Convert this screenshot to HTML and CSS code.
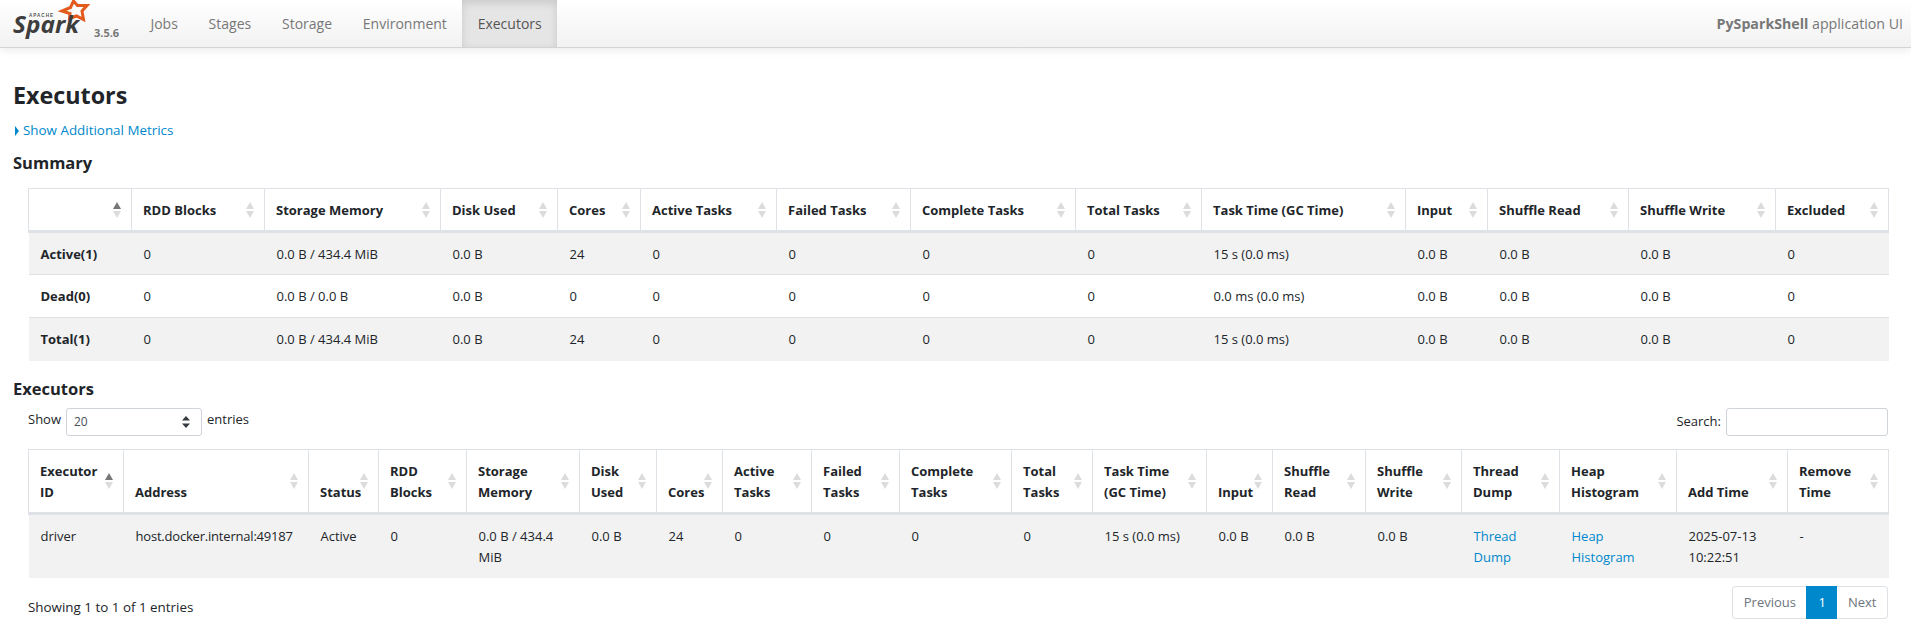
FILE: index.html
```html
<!DOCTYPE html>
<html lang="en">
<head>
<meta charset="utf-8">
<title>PySparkShell - Executors</title>
<link rel="stylesheet" href="styles.css">
</head>
<body>
<nav class="navbar">
  <a class="brand" href="#">
    <svg class="logo" width="80" height="40" viewBox="0 0 80 40">
      <polygon fill="none" stroke="#e25a1c" stroke-width="3" stroke-miterlimit="6" points="62.5,1 66.5,5.5 76,5.5 71,11 72.5,19.5 65.5,16 58.5,18.5 59,13.5 51,11 59.5,7.5"/>
      <text class="logo-apache" x="18" y="16.5">APACHE</text>
      <text class="logo-spark" x="2" y="33" textLength="66" lengthAdjust="spacingAndGlyphs">Spark</text>
    </svg>
    <span class="version">3.5.6</span>
  </a>
  <ul class="tabs">
    <li><a href="#">Jobs</a></li>
    <li><a href="#">Stages</a></li>
    <li><a href="#">Storage</a></li>
    <li><a href="#">Environment</a></li>
    <li class="active"><a href="#">Executors</a></li>
  </ul>
  <p class="app-name"><strong>PySparkShell</strong> application UI</p>
</nav>

<main class="page">
  <h3 class="page-title">Executors</h3>
  <a class="metrics-toggle" href="#"><span class="caret"></span>Show Additional Metrics</a>

  <h4 class="section-title summary-title">Summary</h4>
  <div class="indent">
    <table class="grid summary">
      <colgroup><col><col><col><col><col><col><col><col><col><col><col><col><col><col></colgroup>
      <thead>
        <tr>
          <th class="sorted"></th><th>RDD Blocks</th><th>Storage Memory</th><th>Disk Used</th><th>Cores</th><th>Active Tasks</th><th>Failed Tasks</th><th>Complete Tasks</th><th>Total Tasks</th><th>Task Time (GC Time)</th><th>Input</th><th>Shuffle Read</th><th>Shuffle Write</th><th>Excluded</th>
        </tr>
      </thead>
      <tbody>
        <tr><td class="label">Active(1)</td><td>0</td><td>0.0 B / 434.4 MiB</td><td>0.0 B</td><td>24</td><td>0</td><td>0</td><td>0</td><td>0</td><td>15 s (0.0 ms)</td><td>0.0 B</td><td>0.0 B</td><td>0.0 B</td><td>0</td></tr>
        <tr><td class="label">Dead(0)</td><td>0</td><td>0.0 B / 0.0 B</td><td>0.0 B</td><td>0</td><td>0</td><td>0</td><td>0</td><td>0</td><td>0.0 ms (0.0 ms)</td><td>0.0 B</td><td>0.0 B</td><td>0.0 B</td><td>0</td></tr>
        <tr><td class="label">Total(1)</td><td>0</td><td>0.0 B / 434.4 MiB</td><td>0.0 B</td><td>24</td><td>0</td><td>0</td><td>0</td><td>0</td><td>15 s (0.0 ms)</td><td>0.0 B</td><td>0.0 B</td><td>0.0 B</td><td>0</td></tr>
      </tbody>
    </table>
  </div>

  <h4 class="section-title executors-title">Executors</h4>
  <div class="indent">
    <div class="table-controls">
      <label class="length">Show
        <span class="select-wrap">
          <select class="length-select"><option>20</option></select>
          <svg class="select-arrows" width="8" height="12" viewBox="0 0 8 12"><path fill="#343a40" d="M4 0 L8 4.5 H0 Z M0 7.5 H8 L4 12 Z"/></svg>
        </span>
        entries</label>
      <label class="search">Search: <input class="search-input" type="text"></label>
    </div>
    <table class="grid executors">
      <colgroup><col><col><col><col><col><col><col><col><col><col><col><col><col><col><col><col><col><col><col></colgroup>
      <thead>
        <tr>
          <th class="sorted">Executor ID</th><th>Address</th><th>Status</th><th>RDD Blocks</th><th>Storage Memory</th><th>Disk Used</th><th>Cores</th><th>Active Tasks</th><th>Failed Tasks</th><th>Complete Tasks</th><th>Total Tasks</th><th>Task Time (GC Time)</th><th>Input</th><th>Shuffle Read</th><th>Shuffle Write</th><th>Thread Dump</th><th>Heap Histogram</th><th>Add Time</th><th>Remove Time</th>
        </tr>
      </thead>
      <tbody>
        <tr><td>driver</td><td class="address">host.docker.internal:49187</td><td>Active</td><td>0</td><td>0.0 B / 434.4 MiB</td><td>0.0 B</td><td>24</td><td>0</td><td>0</td><td>0</td><td>0</td><td>15 s (0.0 ms)</td><td>0.0 B</td><td>0.0 B</td><td>0.0 B</td><td><a href="#">Thread Dump</a></td><td><a href="#">Heap Histogram</a></td><td>2025-07-13 10:22:51</td><td>-</td></tr>
      </tbody>
    </table>
    <div class="table-footer">
      <div class="info">Showing 1 to 1 of 1 entries</div>
      <ul class="pagination">
        <li class="disabled"><a href="#">Previous</a></li>
        <li class="current"><a href="#">1</a></li>
        <li class="disabled"><a href="#">Next</a></li>
      </ul>
    </div>
  </div>
</main>
</body>
</html>
```
FILE: styles.css
```css
* { box-sizing: border-box; }
html, body { margin: 0; padding: 0; }
body {
  font-family: "Open Sans", "Noto Sans", sans-serif;
  font-size: 13px;
  line-height: 21px;
  color: #212529;
  background: #fff;
  overflow: hidden;
}
a { color: #0088cc; text-decoration: none; }

/* Navbar */
.navbar {
  display: flex;
  align-items: stretch;
  height: 48px;
  background: linear-gradient(to bottom, #ffffff, #f2f2f2);
  border-bottom: 1px solid #d4d4d4;
  box-shadow: 0 1px 10px rgba(0, 0, 0, 0.1);
  overflow: hidden;
}
.brand { position: relative; display: block; width: 135px; flex: none; }
.logo { position: absolute; left: 11px; top: 0; overflow: visible; }
.logo-apache { font: 700 4.6px "Liberation Sans", sans-serif; letter-spacing: 1px; fill: #555; }
.logo-spark { font: italic 700 23px "Open Sans", sans-serif; fill: #3d3d3d; }
.version {
  position: absolute;
  left: 94px;
  top: 22px;
  font-size: 11px;
  font-weight: 700;
  color: #777;
}
.tabs { display: flex; list-style: none; margin: 0; padding: 0; flex: 1; }
.tabs a {
  display: block;
  height: 47px;
  padding: 13px 15.4px 0;
  font-size: 14px;
  color: #777;
}
.tabs .active a {
  background: #e5e5e5;
  color: #555;
  box-shadow: inset 0 3px 8px rgba(0, 0, 0, 0.125);
}
.app-name { margin: 13px 8px 0 0; font-size: 14.2px; color: #777; }

/* Page */
.page { padding: 0 23px 0 13px; }
.page-title { margin: 30px 0 0; font-size: 23.3px; line-height: 34px; font-weight: 700; }
.metrics-toggle { display: flex; align-items: center; margin: 8px 0 0 1px; height: 21px; font-size: 13.4px; }
.caret {
  width: 0;
  height: 0;
  margin: 0 4px 0 1px;
  border-left: 4px solid #0088cc;
  border-top: 5px solid transparent;
  border-bottom: 5px solid transparent;
}
.section-title { margin: 0; font-size: 16.5px; line-height: 24px; font-weight: 700; }
.summary-title { margin-top: 10px; }
.executors-title { margin-top: 16px; }
.summary-title + .indent { margin-top: 13px; }
.indent { margin-left: 15px; }

/* Tables */
.grid { table-layout: fixed; width: 1860px; border-collapse: collapse; }
.grid th, .grid td { padding: 10px 12px; text-align: left; vertical-align: top; }
.grid th {
  position: relative;
  vertical-align: bottom;
  font-weight: 700;
  padding: 11px 24px 9px 11px;
  border: 1px solid #dee2e6;
  border-bottom-width: 3px;
}
.grid th::before, .grid th::after {
  content: "";
  position: absolute;
  right: 10px;
  width: 0;
  height: 0;
  border-left: 4px solid transparent;
  border-right: 4px solid transparent;
}
.grid th::before { top: calc(50% - 8px); border-bottom: 7px solid #dcdcdc; }
.grid th::after { top: calc(50% + 1px); border-top: 7px solid #dcdcdc; }
.grid th.sorted::before { border-bottom-color: #777; }
.grid td { border-top: 1px solid #dee2e6; }
.grid tbody tr:nth-child(odd) { background: #f2f2f2; }
.grid thead + tbody tr:first-child td { border-top: 0; }
.label { font-weight: 700; }
.summary td { height: 43px; padding-top: 11px; padding-bottom: 9px; }
.executors td { padding-top: 11px; }
.address { letter-spacing: -0.2px; }

.summary col:nth-child(1) { width: 103px; }
.summary col:nth-child(2) { width: 133px; }
.summary col:nth-child(3) { width: 176px; }
.summary col:nth-child(4) { width: 117px; }
.summary col:nth-child(5) { width: 83px; }
.summary col:nth-child(6) { width: 136px; }
.summary col:nth-child(7) { width: 134px; }
.summary col:nth-child(8) { width: 165px; }
.summary col:nth-child(9) { width: 126px; }
.summary col:nth-child(10) { width: 204px; }
.summary col:nth-child(11) { width: 82px; }
.summary col:nth-child(12) { width: 141px; }
.summary col:nth-child(13) { width: 147px; }
.summary col:nth-child(14) { width: 113px; }

.executors col:nth-child(1) { width: 95px; }
.executors col:nth-child(2) { width: 185px; }
.executors col:nth-child(3) { width: 70px; }
.executors col:nth-child(4) { width: 88px; }
.executors col:nth-child(5) { width: 113px; }
.executors col:nth-child(6) { width: 77px; }
.executors col:nth-child(7) { width: 66px; }
.executors col:nth-child(8) { width: 89px; }
.executors col:nth-child(9) { width: 88px; }
.executors col:nth-child(10) { width: 112px; }
.executors col:nth-child(11) { width: 81px; }
.executors col:nth-child(12) { width: 114px; }
.executors col:nth-child(13) { width: 66px; }
.executors col:nth-child(14) { width: 93px; }
.executors col:nth-child(15) { width: 96px; }
.executors col:nth-child(16) { width: 98px; }
.executors col:nth-child(17) { width: 117px; }
.executors col:nth-child(18) { width: 111px; }
.executors col:nth-child(19) { width: 101px; }

/* Controls */
.table-controls { display: flex; justify-content: space-between; align-items: flex-start; margin-top: 7px; height: 41px; }
.length, .search { display: flex; align-items: center; gap: 5px; }
.length { height: 24px; }
.search { height: 28px; }
.select-wrap { position: relative; display: block; }
.length-select {
  display: block;
  appearance: none;
  width: 136px;
  height: 28px;
  margin-top: 4px;
  padding: 0 7px;
  font: 12px/26px "Open Sans", sans-serif;
  color: #495057;
  background: #fff;
  border: 1px solid #ced4da;
  border-radius: 3px;
}
.select-arrows { position: absolute; right: 12px; top: 12px; }
.search-input {
  width: 162px;
  height: 28px;
  padding: 0 8px;
  background: #fff;
  border: 1px solid #ced4da;
  border-radius: 3px;
}
.table-footer { display: flex; justify-content: space-between; align-items: flex-start; margin-top: 8px; }
.info { margin-top: 11px; font-size: 13.4px; }
.pagination { display: flex; list-style: none; margin: 0; padding: 0; height: 33px; }
.pagination a { display: block; height: 33px; padding: 5px 10.5px; border: 1px solid #dee2e6; }
.pagination .disabled a { color: #6c757d; background: #fff; }
.pagination li:first-child a { border-radius: 4px 0 0 4px; border-right: 0; }
.pagination li:last-child a { border-radius: 0 4px 4px 0; border-left: 0; }
.pagination .current a { padding: 5px 11px; width: 31px; color: #fff; background: #0088cc; border-color: #0088cc; }
```
